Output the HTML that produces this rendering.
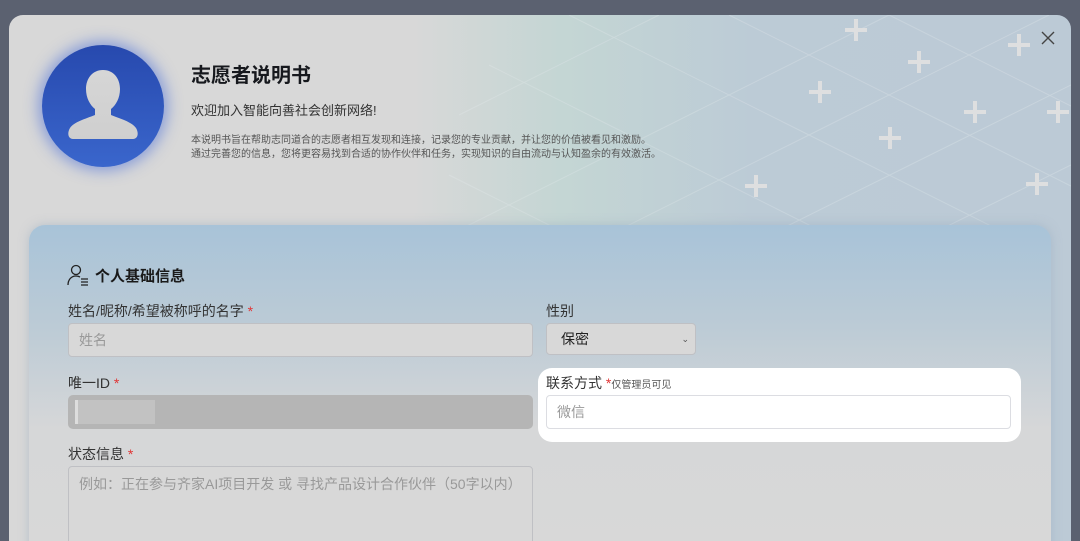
<!DOCTYPE html>
<html><head><meta charset="utf-8"><style>
*{box-sizing:border-box;margin:0;padding:0}
html,body{width:1080px;height:541px;overflow:hidden}
body{background:#5b6170;font-family:"Liberation Sans","Noto Sans CJK SC",sans-serif;position:relative}
.modal{position:absolute;left:9px;top:15px;width:1062px;height:526px;border-radius:14px 14px 0 0;overflow:hidden;background:linear-gradient(90deg,#d8d8d8 0%,#d8d8d8 38%,#c4d6d4 52%,#bccbd6 70%,#bccad6 100%)}
svg.bg{position:absolute;left:0;top:0}
.avatar{position:absolute;left:33px;top:30px;width:122px;height:122px;border-radius:50%;background:linear-gradient(180deg,#2749ae,#3a66cc);box-shadow:0 0 14px 4px rgba(60,100,220,0.5)}
h1{position:absolute;left:182px;top:44px;font-size:20px;font-weight:bold;color:#16181d}
.sub{position:absolute;left:182px;top:85px;font-size:13px;color:#333}
.desc{position:absolute;left:182px;top:119px;font-size:10px;line-height:14px;color:#555}
.card{position:absolute;left:20px;top:210px;width:1022px;height:340px;border-radius:16px;background:linear-gradient(180deg,#a8c3d8 0%,#bccbd6 30%,#d6d7d8 60%,#d8d8d8 100%);box-shadow:0 0 10px rgba(150,170,190,0.5)}
.lbl{position:absolute;font-size:14px;color:#333}
.lbl b{color:#e03535;font-weight:normal}
.inp{position:absolute;border:1px solid #bfc0c4;border-radius:4px;background:#d8d8d8;font-size:14px;color:#999;padding-left:10px}
</style></head><body>
<div class="modal">
<svg class="bg" width="1062" height="240" viewBox="0 0 1062 240">
<g stroke="#e6ecee" stroke-width="1" opacity="0.3">
<line x1="400" y1="240" x2="880" y2="0"/><line x1="560" y1="240" x2="1040" y2="0"/><line x1="720" y1="240" x2="1062" y2="70"/><line x1="880" y1="240" x2="1062" y2="150"/><line x1="450" y1="100" x2="650" y2="0"/>
<line x1="480" y1="50" x2="860" y2="240"/><line x1="560" y1="0" x2="1040" y2="240"/><line x1="720" y1="0" x2="1062" y2="171"/><line x1="880" y1="0" x2="1062" y2="91"/><line x1="440" y1="160" x2="600" y2="240"/>
</g>
<g stroke="#dedfe0" stroke-width="4">
<path d="M847 4v22M836 15h22M910 36v22M899 47h22M1010 19v22M999 30h22M811 66v22M800 77h22M966 86v22M955 97h22M1049 86v22M1038 97h22M881 112v22M870 123h22M747 160v22M736 171h22M1028 158v22M1017 169h22"/>
</g>
<path d="M1033 17l12 12M1045 17l-12 12" stroke="#444" stroke-width="1.4"/>
</svg>
<div class="avatar"><svg width="122" height="122" viewBox="0 0 122 122"><defs><linearGradient id="g" x1="0" y1="0" x2="0" y2="1"><stop offset="0" stop-color="#d6d6d6"/><stop offset="1" stop-color="#cfcfcf"/></linearGradient></defs><path d="M61 25c-11 0-17 9-17 19 0 9 4 16 9 20l0 6c-10 4-21 7-25 13-3 5-2 11 3 11h60c5 0 6-6 3-11-4-6-15-9-25-13l0-6c5-4 9-11 9-20 0-10-6-19-17-19z" fill="url(#g)"/></svg></div>
<h1>志愿者说明书</h1>
<div class="sub">欢迎加入智能向善社会创新网络!</div>
<div class="desc">本说明书旨在帮助志同道合的志愿者相互发现和连接，记录您的专业贡献，并让您的价值被看见和激励。<br>通过完善您的信息，您将更容易找到合适的协作伙伴和任务，实现知识的自由流动与认知盈余的有效激活。</div>
<div class="card">
<svg style="position:absolute;left:38px;top:38px" width="24" height="24" viewBox="0 0 24 24" fill="none" stroke="#222" stroke-width="1.3"><circle cx="9" cy="7" r="4.5"/><path d="M1 22c0-5 3-9 8-9 2 0 3 .5 4 1"/><path d="M14 16h7M14 19h7M14 22h7"/></svg>
<div style="position:absolute;left:66px;top:40px;font-size:15px;font-weight:bold;color:#1a1a1a">个人基础信息</div>
<div class="lbl" style="left:39px;top:76px">姓名/昵称/希望被称呼的名字 <b>*</b></div>
<div class="inp" style="left:39px;top:98px;width:465px;height:34px;line-height:32px">姓名</div>
<div class="lbl" style="left:517px;top:76px">性别</div>
<div class="inp" style="left:517px;top:98px;width:150px;height:32px;line-height:30px;color:#222;padding-left:14px">保密<span style="position:absolute;right:6px;top:0;font-size:9px;color:#555">⌄</span></div>
<div class="lbl" style="left:39px;top:148px">唯一ID <b>*</b></div>
<div style="position:absolute;left:39px;top:170px;width:465px;height:34px;border-radius:5px;background:#b5b5b5"><div style="position:absolute;left:7px;top:5px;width:80px;height:24px;background:#c2c2c2"></div><div style="position:absolute;left:7px;top:5px;width:3px;height:24px;background:#ddd"></div></div>
<div style="position:absolute;left:509px;top:143px;width:483px;height:74px;border-radius:14px;background:#fff"></div>
<div class="lbl" style="left:517px;top:148px">联系方式 <b>*</b><span style="font-size:10px;color:#555">仅管理员可见</span></div>
<div class="inp" style="left:517px;top:170px;width:465px;height:34px;line-height:32px;background:#fff;border-color:#dcdde2">微信</div>
<div class="lbl" style="left:39px;top:219px">状态信息 <b>*</b></div>
<div class="inp" style="left:39px;top:241px;width:465px;height:120px;padding-top:8px;line-height:18px">例如：正在参与齐家AI项目开发 或 寻找产品设计合作伙伴（50字以内）</div>
</div>
</div>
</body></html>
